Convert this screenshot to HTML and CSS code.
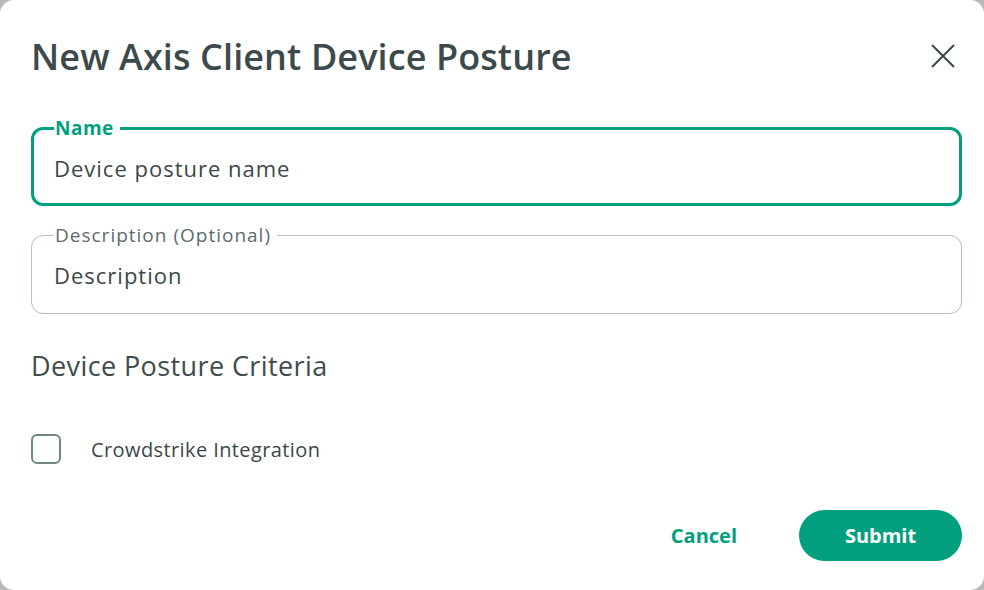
FILE: index.html
```html
<!DOCTYPE html>
<html lang="en">
<head>
    <meta charset="UTF-8">
    <meta name="viewport" content="width=device-width, initial-scale=1.0">
    <title>New Axis Client Device Posture</title>
    <link rel="stylesheet" href="styles.css">
</head>
<body>
    <div class="dialog">
        <div class="dialog-header">
            <h1>New Axis Client Device Posture</h1>
            <button class="close-btn" aria-label="Close">
                <svg width="24" height="24" viewBox="0 0 24 24">
                    <path d="M1 1 L23 23 M23 1 L1 23" stroke="#3a4647" stroke-width="2" fill="none"/>
                </svg>
            </button>
        </div>

        <fieldset class="field field-active">
            <legend>Name</legend>
            <input type="text" placeholder="Device posture name">
        </fieldset>

        <fieldset class="field">
            <legend>Description (Optional)</legend>
            <input type="text" placeholder="Description">
        </fieldset>

        <h2 class="section-title">Device Posture Criteria</h2>

        <label class="check-row">
            <span class="checkbox"></span>
            <span class="check-label">Crowdstrike Integration</span>
        </label>

        <div class="actions">
            <button class="btn-text">Cancel</button>
            <button class="btn-primary">Submit</button>
        </div>
    </div>
</body>
</html>
```

FILE: styles.css
```css
:root {
    --green: #00a07f;
    --text-color: #3c4748;
    --muted: #5e6b6c;
    --border: #b3bfc0;
}

body {
    margin: 0;
    background-color: #b8b8b8;
    font-family: 'Open Sans', Lato, sans-serif;
    color: var(--text-color);
}

.dialog {
    box-sizing: border-box;
    width: 984px;
    height: 590px;
    background-color: white;
    border-radius: 14px;
    padding: 26px 22px 0 31px;
}

.dialog-header {
    display: flex;
    justify-content: space-between;
    align-items: center;
    margin-bottom: 30px;
}

h1 {
    margin: 0;
    font-size: 36px;
    font-weight: 600;
    color: #3d4a4b;
    letter-spacing: 0.1px;
    line-height: 62px;
}

.close-btn {
    background: none;
    border: none;
    padding: 0;
    margin-right: 7px;
    margin-bottom: 2px;
    cursor: pointer;
    display: flex;
}

.field {
    box-sizing: border-box;
    margin: 0 0 19px 0;
    padding: 0 22px;
    border: 1px solid var(--border);
    border-radius: 12px;
    height: 89px;
    display: block;
}

.field legend {
    padding: 0 6px 0 1px;
    font-size: 19px;
    letter-spacing: 1px;
    color: var(--muted);
    line-height: 20px;
}

.field input {
    display: block;
    border: none;
    outline: none;
    padding: 0;
    margin-top: 15px;
    height: 30px;
    width: 100%;
    font-family: inherit;
    font-size: 22px;
    letter-spacing: 1px;
    color: var(--text-color);
    background: transparent;
}

.field input::placeholder {
    color: var(--text-color);
    opacity: 1;
}

.field-active {
    border: 3px solid var(--green);
    padding: 0 20px;
    height: 88px;
}

.field-active legend {
    color: var(--green);
    font-weight: 700;
    letter-spacing: 0.5px;
}

.section-title {
    margin: 34px 0 0 0;
    font-size: 27px;
    font-weight: 400;
    letter-spacing: 0.4px;
    line-height: 36px;
    color: #3f4c4d;
}

.check-row {
    display: flex;
    align-items: center;
    margin-top: 50px;
    gap: 30px;
}

.checkbox {
    box-sizing: border-box;
    width: 30px;
    height: 30px;
    border: 2px solid #6f8789;
    border-radius: 6px;
}

.check-label {
    font-size: 20px;
    letter-spacing: 0.4px;
    color: var(--text-color);
}

.actions {
    display: flex;
    justify-content: flex-end;
    align-items: center;
    gap: 62px;
    margin-top: 46px;
}

.btn-text {
    background: none;
    border: none;
    padding: 0;
    font-family: inherit;
    font-size: 20px;
    font-weight: 700;
    color: var(--green);
    cursor: pointer;
}

.btn-primary {
    width: 163px;
    height: 51px;
    background-color: var(--green);
    color: white;
    border: none;
    border-radius: 26px;
    font-family: inherit;
    font-size: 20px;
    font-weight: 700;
    cursor: pointer;
}
```
